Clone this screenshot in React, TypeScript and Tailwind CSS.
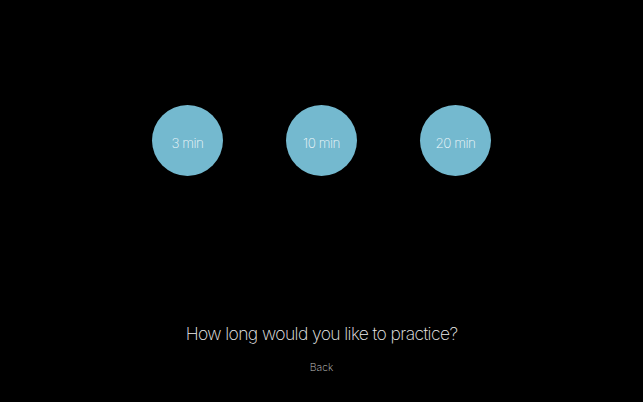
export default function App() {
  const options = ['3 min', '10 min', '20 min'];

  return (
    <div className="w-[643px] h-[402px] bg-black flex flex-col items-center font-['Inter',sans-serif] font-extralight">
      {/* Duration choices */}
      <div className="mt-[105px] flex gap-[63px]">
        {options.map((label) => (
          <button
            key={label}
            className="w-[71px] h-[71px] rounded-full bg-[#74b9cf] text-[13.5px] text-[#f0f8fb] tracking-[-0.5px] flex items-center justify-center pt-[5px]"
          >
            {label}
          </button>
        ))}
      </div>

      <h1 className="mt-[146px] text-[17.5px] leading-[24px] text-[#ececec] tracking-[-0.6px]">
        How long would you like to practice?
      </h1>

      <button className="mt-[14px] text-[10.5px] text-[#c4c4c4]">Back</button>
    </div>
  );
}
